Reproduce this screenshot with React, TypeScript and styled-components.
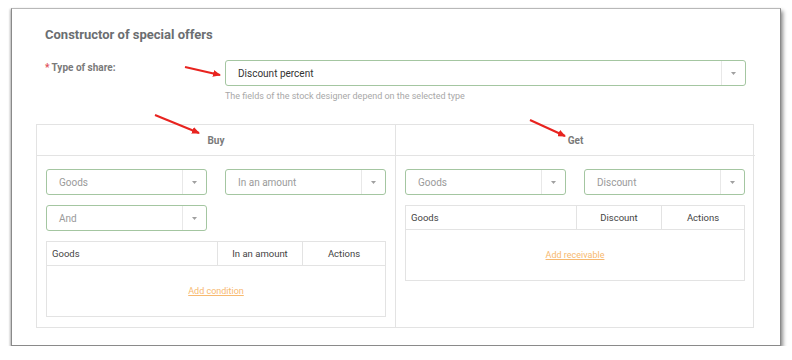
import styled, { createGlobalStyle } from "styled-components";

/* ─── GLOBAL ──────────────────────────────────────────────────────── */

const GlobalStyle = createGlobalStyle`
  html, body {
    margin: 0;
    padding: 0;
    background: #ffffff;
    font-family: Roboto, "Liberation Sans", Arial, sans-serif;
  }
  * { box-sizing: border-box; }
`;

/* ─── PARTS ───────────────────────────────────────────────────────── */

function Select({ value, placeholder }: { value: string; placeholder?: boolean }) {
  return (
    <SelectBox>
      <SelectValue $placeholder={placeholder}>{value}</SelectValue>
      <SelectCaret>
        <svg width="5" height="3" viewBox="0 0 5 3">
          <path d="M0 0 L5 0 L2.5 3 Z" fill="#a0a0a0" />
        </svg>
      </SelectCaret>
    </SelectBox>
  );
}

function ItemsTable({ middle, link }: { middle: string; link: string }) {
  return (
    <Table>
      <HeadRow>
        <HeadCell $align="left">Goods</HeadCell>
        <HeadCell>{middle}</HeadCell>
        <HeadCell>Actions</HeadCell>
      </HeadRow>
      <EmptyBody>
        <AddLink href="#">{link}</AddLink>
      </EmptyBody>
    </Table>
  );
}

/* ─── COMPONENT ───────────────────────────────────────────────────── */

export default function App() {
  return (
    <>
      <GlobalStyle />
      <Frame>
        <Title>Constructor of special offers</Title>
        <FormRow>
          <Label>
            <Required>*</Required>Type of share:
          </Label>
          <Field>
            <Select value="Discount percent" />
            <Hint>The fields of the stock designer depend on the selected type</Hint>
          </Field>
        </FormRow>

        <Panels>
          <Panel>
            <PanelHeader>Buy</PanelHeader>
            <PanelBody>
              <SelectGrid>
                <Select value="Goods" placeholder />
                <Select value="In an amount" placeholder />
                <Select value="And" placeholder />
              </SelectGrid>
              <ItemsTable middle="In an amount" link="Add condition" />
            </PanelBody>
            <ScrollLine />
          </Panel>
          <Panel>
            <PanelHeader>Get</PanelHeader>
            <PanelBody>
              <SelectGrid>
                <Select value="Goods" placeholder />
                <Select value="Discount" placeholder />
              </SelectGrid>
              <ItemsTable middle="Discount" link="Add receivable" />
            </PanelBody>
          </Panel>
        </Panels>

        <Annotations width="792" height="360" viewBox="0 0 792 360">
          <defs>
            <marker id="head" markerWidth="8" markerHeight="7" refX="7" refY="3.5" orient="auto" markerUnits="userSpaceOnUse">
              <path d="M0 0 L8 3.5 L0 7 Z" fill="#e8231f" />
            </marker>
          </defs>
          <line x1="185" y1="67" x2="220" y2="75" stroke="#e8231f" strokeWidth="2" markerEnd="url(#head)" />
          <line x1="155" y1="115" x2="199" y2="133" stroke="#e8231f" strokeWidth="2" markerEnd="url(#head)" />
          <line x1="530" y1="120" x2="565" y2="136" stroke="#e8231f" strokeWidth="2" markerEnd="url(#head)" />
        </Annotations>
      </Frame>
    </>
  );
}

/* ─── STYLED COMPONENTS ───────────────────────────────────────────── */

const Frame = styled.div`
  position: relative;
  margin: 8px 0 0 11px;
  width: 770px;
  height: 338px;
  padding: 18px 25px 0 24px;
  background: #fff;
  border: 1px solid #b8b8b8;
  border-left-color: #8a8a8a;
  border-right-color: #8a8a8a;
  border-bottom-color: #8a8a8a;
  box-shadow: 2px 3px 4px rgba(0, 0, 0, 0.45), -1px 1px 2px rgba(0, 0, 0, 0.25);
`;

const Title = styled.h1`
  margin: 0 0 0 9px;
  font-size: 13px;
  line-height: 16px;
  font-weight: 700;
  color: #6b6e71;
`;

const FormRow = styled.div`
  display: flex;
  margin-top: 17px;
  padding-left: 9px;
`;

const Label = styled.div`
  width: 180px;
  padding-top: 2px;
  font-size: 10px;
  font-weight: 700;
  color: #7a7a7a;
`;

const Required = styled.span`
  color: #e0505a;
  margin-right: 2px;
`;

const Field = styled.div`
  flex: 1;
  padding-right: 9px;
`;

const Hint = styled.div`
  margin-top: 5px;
  font-size: 9px;
  color: #a8a8a8;
`;

const SelectBox = styled.div`
  display: flex;
  height: 26px;
  border: 1px solid #a4c6a1;
  border-radius: 3px;
  background: #fff;
`;

const SelectValue = styled.div<{ $placeholder?: boolean }>`
  flex: 1;
  display: flex;
  align-items: center;
  padding-left: 12px;
  font-size: 10px;
  color: ${(p) => (p.$placeholder ? "#9a9a9a" : "#333")};
`;

const SelectCaret = styled.div`
  width: 24px;
  display: flex;
  align-items: center;
  justify-content: center;
  border-left: 1px solid #e8e8e8;
`;

const Panels = styled.div`
  display: grid;
  grid-template-columns: 358px 360px;
  margin-top: 23px;
  width: 718px;
  height: 204px;
  border: 1px solid #e3e3e3;
`;

const Panel = styled.div`
  position: relative;
  & + & {
    border-left: 1px solid #e3e3e3;
  }
`;

const ScrollLine = styled.div`
  position: absolute;
  right: -1px;
  top: 31px;
  height: 135px;
  width: 1px;
  background: #d0d0d0;
`;

const PanelHeader = styled.div`
  height: 31px;
  display: flex;
  align-items: center;
  justify-content: center;
  border-bottom: 1px solid #e3e3e3;
  font-size: 10px;
  font-weight: 700;
  color: #7a7a7a;
`;

const PanelBody = styled.div`
  padding: 13px 9px 0 9px;
`;

const SelectGrid = styled.div`
  display: grid;
  grid-template-columns: 161px 161px;
  column-gap: 18px;
  row-gap: 10px;
  margin-bottom: 10px;
`;

const Table = styled.div`
  border: 1px solid #e3e3e3;
  width: 340px;
`;

const HeadRow = styled.div`
  display: grid;
  grid-template-columns: 170px 85px 1fr;
  height: 24px;
  border-bottom: 1px solid #e3e3e3;
`;

const HeadCell = styled.div<{ $align?: "left" | "center" }>`
  display: flex;
  align-items: center;
  justify-content: ${(p) => (p.$align === "left" ? "flex-start" : "center")};
  padding-left: ${(p) => (p.$align === "left" ? "5px" : "0")};
  font-size: 9.5px;
  color: #444;
  & + & {
    border-left: 1px solid #e3e3e3;
  }
`;

const EmptyBody = styled.div`
  height: 50px;
  display: flex;
  align-items: center;
  justify-content: center;
`;

const AddLink = styled.a`
  font-size: 9px;
  color: #f7b970;
  text-decoration: underline;
`;

const Annotations = styled.svg`
  position: absolute;
  left: -12px;
  top: -9px;
  pointer-events: none;
`;
